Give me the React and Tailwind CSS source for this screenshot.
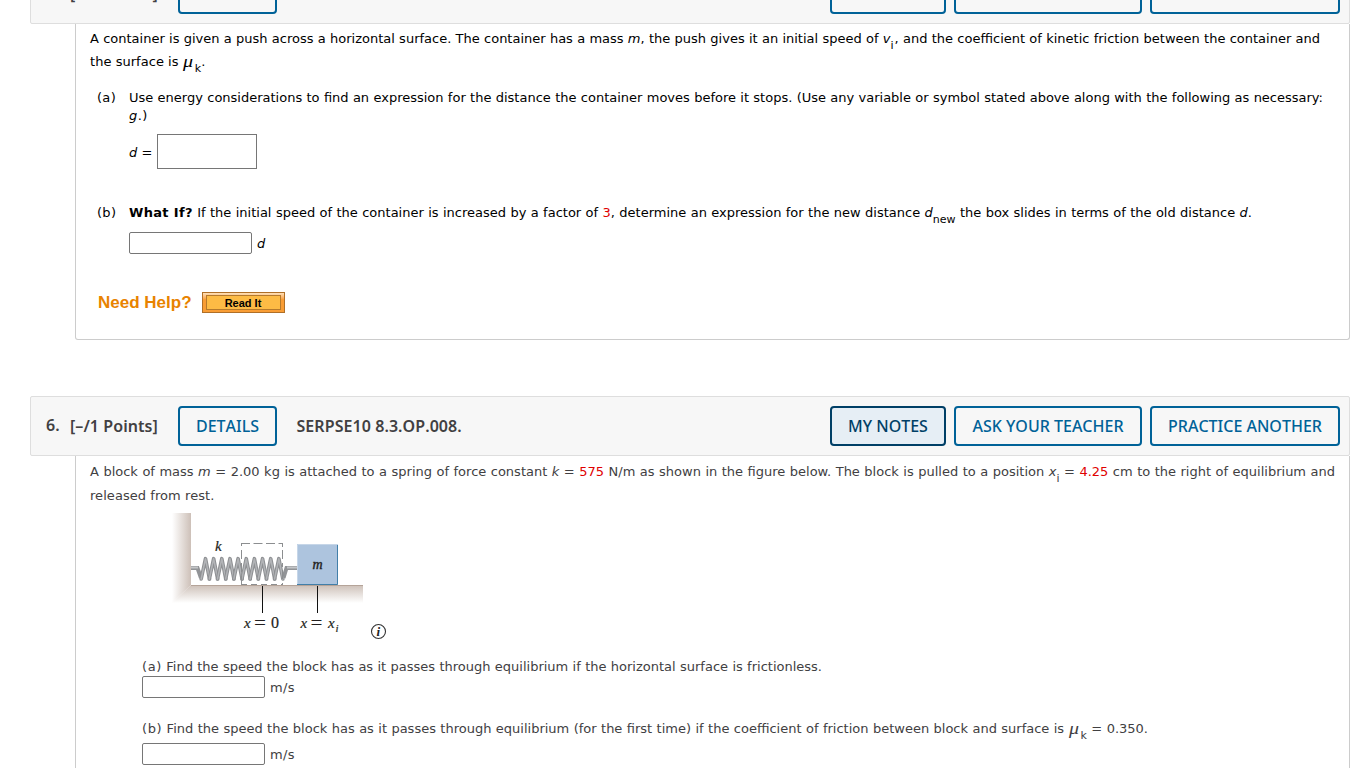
import React from "react";

const Var = ({ children }) => <span className="italic">{children}</span>;

const Mu = () => (
  <span className="inline-block w-3 origin-left translate-y-px scale-x-125 font-['Liberation_Serif',serif] text-[16px] leading-[0] italic [text-align-last:left]">μ</span>
);

const Sub = ({ children }) => (
  <span className="align-[-6px] text-[11px] leading-[0]">{children}</span>
);

const Red = ({ children }) => <span className="text-[#e00000]">{children}</span>;

const Line = ({ className = "", children }) => (
  <div className={"h-5 leading-[22px] whitespace-nowrap shrink-0 " + className}>{children}</div>
);

const HeaderButton = ({ className = "", active, children }) => (
  <button
    className={
      "h-10 shrink-0 rounded border-2 text-center text-[16px] font-medium leading-9 whitespace-nowrap " +
      (active ? "border-[#003f66] bg-[#e6eef5] text-[#003f66] " : "border-[#006298] bg-transparent text-[#006298] ") +
      className
    }
  >
    {children}
  </button>
);

function QuestionHeader({ number, points, code, notesOpen }) {
  return (
    <header className="flex h-[60px] shrink-0 items-center rounded-[2px] border border-[#dedede] bg-[#f7f7f7] pl-[15px] pr-[9px] font-['Noto_Sans','Open_Sans',sans-serif] text-[16px] text-[#414042] [font-kerning:none]">
      <span className="w-6 shrink-0 pb-0.5 font-semibold">{number}</span>
      <span className="w-[108px] shrink-0 font-semibold tracking-[0.07px] whitespace-nowrap">{points}</span>
      <HeaderButton className="w-[99px]">DETAILS</HeaderButton>
      <span className="ml-[19.5px] font-semibold tracking-[0.07px] whitespace-nowrap">{code}</span>
      <div className="ml-auto flex gap-2">
        <HeaderButton className="w-[116px]" active={notesOpen}>MY NOTES</HeaderButton>
        <HeaderButton className="w-[188px]">ASK YOUR TEACHER</HeaderButton>
        <HeaderButton className="w-[190px]">PRACTICE ANOTHER</HeaderButton>
      </div>
    </header>
  );
}

const AnswerInput = () => (
  <input className="block h-[22px] w-[123px] shrink-0 rounded-[2px] border border-[#767676] bg-white" />
);

const coils = Array.from({ length: 10 }, (_, i) => 198 + i * 8.15);

function SpringFigure() {
  return (
    <svg width="240" height="140" viewBox="160 505 240 140" className="block shrink-0">
      <defs>
        <linearGradient id="wall" x1="0" x2="1" y1="0" y2="0">
          <stop offset="0" stopColor="#fff" />
          <stop offset="1" stopColor="#cdc0b8" />
        </linearGradient>
        <linearGradient id="floor" x1="0" x2="0" y1="0" y2="1">
          <stop offset="0" stopColor="#cdc0b8" />
          <stop offset="1" stopColor="#fff" />
        </linearGradient>
      </defs>
      <path d="M172 513H191V585L172 603Z" fill="url(#wall)" />
      <path d="M191 585H363V603H172Z" fill="url(#floor)" />
      <path d="M191 585.5H363" stroke="#b5a499" />
      <path d="M191 568H197.5L201 578" fill="none" stroke="#929497" strokeWidth="4" />
      <path d="M191 567.5H198" stroke="#c3c5c7" strokeWidth="2" />
      <path d="M283.5 578L286.5 568H297" fill="none" stroke="#929497" strokeWidth="4" />
      <path d="M287 567.5H297" stroke="#c3c5c7" strokeWidth="2" />
      {coils.map((x) => (
        <g key={x} fill="none" strokeLinecap="round" strokeLinejoin="round">
          <path d={`M${x + 3.2} 579L${x + 7.5} 558.7L${x + 11.5} 579`} stroke="#8e9093" strokeWidth="3.6" />
          <path d={`M${x + 3.2} 579L${x + 7.5} 558.7L${x + 11.5} 579`} stroke="#b2b4b7" strokeWidth="1.5" />
        </g>
      ))}
      <path d="M241.5 585V543.5" stroke="#8c8e90" strokeDasharray="9 4" />
      <path d="M241 543.5H283" stroke="#8c8e90" strokeDasharray="9 3.5" />
      <path d="M282.5 543V585" stroke="#8c8e90" strokeDasharray="4 3 9 4" />
      <path d="M241 584.5H283" stroke="#8c8e90" strokeDasharray="6 4" />
      <rect x="297" y="544" width="41" height="41" fill="#adc4de" />
      <path d="M297.5 585V544.5H338" fill="none" stroke="#c6d6e8" />
      <path d="M337.5 545V584.5H297" fill="none" stroke="#427fa9" />
      <path d="M262.5 586V613M317.5 586V613" stroke="#111" />
      <g fill="#231f20" stroke="#231f20" strokeWidth="0.2" fontFamily="'Liberation Serif', serif" fontSize="15">
        <text x="215" y="551" fontStyle="italic">k</text>
        <text x="312.5" y="569" fontStyle="italic" fontSize="14" strokeWidth="0.4">m</text>
        <text x="244" y="628" fontStyle="italic">x</text>
        <text x="254" y="629" fontSize="18" strokeWidth="0" textLength="12" lengthAdjust="spacingAndGlyphs">=</text>
        <text x="271" y="628" fontSize="16">0</text>
        <text x="300.5" y="628" fontStyle="italic">x</text>
        <text x="310.5" y="629" fontSize="18" strokeWidth="0" textLength="12" lengthAdjust="spacingAndGlyphs">=</text>
        <text x="328" y="628" fontStyle="italic">x</text>
        <text x="335.5" y="631.5" fontStyle="italic" fontSize="11">i</text>
      </g>
      <circle cx="378.5" cy="631.5" r="7" fill="none" stroke="#333" strokeWidth="1.1" />
      <text x="376.4" y="636" fill="#222" fontFamily="'Liberation Serif', serif" fontSize="13" fontStyle="italic" fontWeight="bold">i</text>
    </svg>
  );
}

export default function App() {
  return (
    <main className="h-[768px] w-[1366px] overflow-hidden bg-white pl-[30px] pr-4 font-['Verdana','DejaVu_Sans',sans-serif] text-[13px]">
      <section className="-mt-9 flex h-[376px] flex-col">
        <QuestionHeader number="5." points="[–/2 Points]" code="" />
        <div className="ml-[45px] flex h-[316px] flex-col rounded-b-[3px] border border-t-0 border-[#ccc] pl-3.5 pt-1 text-black">
          <Line className="mb-[3px] w-[1230px] [text-align-last:justify]">
            A container is given a push across a horizontal surface. The container has a mass <Var>m</Var>, the push gives it an initial speed of <Var>v</Var><Sub>i</Sub><span className="ml-px">, </span>and the coefficient of kinetic friction between the container and
          </Line>
          <Line className="mb-4 tracking-[0.04px]">the surface is <Mu /><Sub>k</Sub>.</Line>
          <div className="flex pl-[7px]">
            <Line className="w-8 tracking-[0.3px]">(a)</Line>
            <div>
              <Line className="w-[1194px] [text-align-last:justify]">
                Use energy considerations to find an expression for the distance the container moves before it stops. (Use any variable or symbol stated above along with the following as necessary:
              </Line>
              <Line className="-mt-0.5 tracking-[0.4px]"><Var>g</Var>.)</Line>
              <div className="mt-[9px] flex h-[35px] items-center">
                <Line className="w-7"><Var>d</Var> =</Line>
                <div className="h-[35px] w-[100px] border border-[#767676]" />
              </div>
            </div>
          </div>
          <div className="mt-[33px] flex pl-[7px]">
            <Line className="w-8 tracking-[0.3px]">(b)</Line>
            <div>
              <Line className="w-[1123px] [text-align-last:justify]">
                <b className="tracking-[0.3px]">What If?</b> If the initial speed of the container is increased by a factor of <Red>3</Red>, determine an expression for the new distance <Var>d</Var><Sub>new</Sub> the box slides in terms of the old distance <Var>d</Var>.
              </Line>
              <div className="mt-2.5 flex items-center gap-[5px]">
                <AnswerInput />
                <Line><Var>d</Var></Line>
              </div>
            </div>
          </div>
          <div className="mt-[38px] flex h-[21px] items-center pl-2 font-['Liberation_Sans',sans-serif] font-bold">
            <span className="w-[104px] text-[17px] leading-5 text-[#e88300]">Need Help?</span>
            <button className="h-[21px] w-[83px] border border-[#b06f27] bg-linear-to-b from-[#fde0b8] via-[#f99d35] via-35% to-[#f99d35] p-[2px_3px]">
              <span className="block h-[15px] border border-[#b57a2c] bg-[#fdbb45] pr-px text-[11px] leading-[14px] text-black">Read It</span>
            </button>
          </div>
        </div>
      </section>

      <section className="mt-14 flex flex-col">
        <QuestionHeader number="6." points="[–/1 Points]" code="SERPSE10 8.3.OP.008." notesOpen />
        <div className="ml-[45px] flex h-[400px] flex-col border border-t-0 border-[#ccc] pl-3.5 pt-[5px] text-[#414042]">
          <Line className="mb-1 w-[1245px] [text-align-last:justify]">
            A block of mass <Var>m</Var> = 2.00 kg is attached to a spring of force constant <Var>k</Var> = <Red>575</Red> N/m as shown in the figure below. The block is pulled to a position <Var>x</Var><Sub>i</Sub> = <Red>4.25</Red> cm to the right of equilibrium and
          </Line>
          <Line className="tracking-[0.06px]">released from rest.</Line>
          <div className="pl-[70px]"><SpringFigure /></div>
          <div className="mt-[11px] pl-[52px]">
            <Line className="w-[680px] [text-align-last:justify]"><span className="tracking-[0.6px]">(a)</span> Find the speed the block has as it passes through equilibrium if the horizontal surface is frictionless.</Line>
            <div className="flex items-center gap-[5px]">
              <AnswerInput />
              <Line className="tracking-[0.4px]">m/s</Line>
            </div>
            <Line className="mt-5 w-[1006px] [text-align-last:justify]">
              <span className="tracking-[0.6px]">(b)</span> Find the speed the block has as it passes through equilibrium (for the first time) if the coefficient of friction between block and surface is <Mu /><Sub>k</Sub> = 0.350.
            </Line>
            <div className="mt-[5px] flex items-center gap-[5px]">
              <AnswerInput />
              <Line className="tracking-[0.4px]">m/s</Line>
            </div>
          </div>
        </div>
      </section>
    </main>
  );
}
